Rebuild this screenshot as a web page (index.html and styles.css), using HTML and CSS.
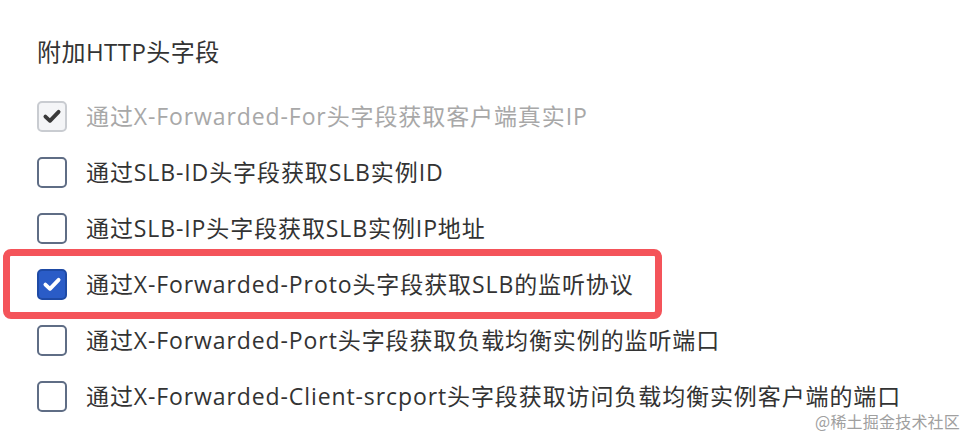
FILE: index.html
```html
<!DOCTYPE html>
<html lang="zh-CN">

<head>
    <meta charset="UTF-8">
    <meta name="viewport" content="width=device-width, initial-scale=1.0">
    <title>附加HTTP头字段</title>
    <link rel="stylesheet" href="styles.css">
</head>

<body>
    <div class="panel">
        <h2 class="titulo">附加HTTP头字段</h2>

        <ul class="lista">
            <li class="item desativado">
                <span class="caixa marcada"><svg viewBox="0 0 20 20"><path d="M4.5 10.5 L8.3 14 L15.5 6.5"/></svg></span>
                <span class="rotulo">通过X-Forwarded-For头字段获取客户端真实IP</span>
            </li>
            <li class="item">
                <span class="caixa"></span>
                <span class="rotulo">通过SLB-ID头字段获取SLB实例ID</span>
            </li>
            <li class="item">
                <span class="caixa"></span>
                <span class="rotulo">通过SLB-IP头字段获取SLB实例IP地址</span>
            </li>
            <li class="item destaque">
                <span class="caixa marcada"><svg viewBox="0 0 20 20"><path d="M4.5 10.5 L8.3 14 L15.5 6.5"/></svg></span>
                <span class="rotulo">通过X-Forwarded-Proto头字段获取SLB的监听协议</span>
            </li>
            <li class="item">
                <span class="caixa"></span>
                <span class="rotulo">通过X-Forwarded-Port头字段获取负载均衡实例的监听端口</span>
            </li>
            <li class="item">
                <span class="caixa"></span>
                <span class="rotulo">通过X-Forwarded-Client-srcport头字段获取访问负载均衡实例客户端的端口</span>
            </li>
        </ul>
    </div>

    <div class="marca">@稀土掘金技术社区</div>
</body>

</html>
```

FILE: styles.css
```css
body {
    margin: 0;
    width: 974px;
    height: 438px;
    overflow: hidden;
    background: #fff;
    font-family: "Open Sans", "Noto Sans CJK SC", sans-serif;
    color: #333;
    position: relative;
}

.panel {
    padding: 36px 0 0 37px;
}

.titulo {
    margin: 0 0 20px;
    font-size: 24px;
    font-weight: normal;
    letter-spacing: 0.45px;
    line-height: 32px;
    color: #333;
}

.lista {
    list-style: none;
    margin: 0;
    padding: 0;
}

.item {
    display: flex;
    align-items: center;
    gap: 19px;
    height: 56px;
    font-size: 23px;
    letter-spacing: 0.9px;
}

.rotulo {
    line-height: 26px;
}

.item.desativado {
    color: #a8a8a8;
}

.caixa {
    width: 26px;
    height: 27px;
    border: 2px solid #5f6d85;
    border-radius: 5px;
    display: flex;
    align-items: center;
    justify-content: center;
    flex-shrink: 0;
}

.caixa svg {
    width: 24px;
    height: 24px;
    fill: none;
    stroke: #fff;
    stroke-width: 3.2;
    stroke-linecap: round;
    stroke-linejoin: round;
}

.marcada {
    background: #2a5cc7;
    border-color: #1e4aa5;
}

.desativado .caixa {
    background: #f4f5f7;
    border-color: #c9ccd1;
}

.desativado .caixa svg {
    stroke: #3a3a3a;
}

.destaque {
    margin: -7px 0 -7px -34px;
    padding-left: 27px;
    width: 618px;
    border: 7px solid #f4545a;
    border-radius: 8px;
}

.marca {
    position: absolute;
    right: 14px;
    bottom: 8px;
    font-size: 16px;
    line-height: 18px;
    letter-spacing: 0.2px;
    color: #a0a0a0;
    font-family: "Noto Sans CJK SC", sans-serif;
}
```
